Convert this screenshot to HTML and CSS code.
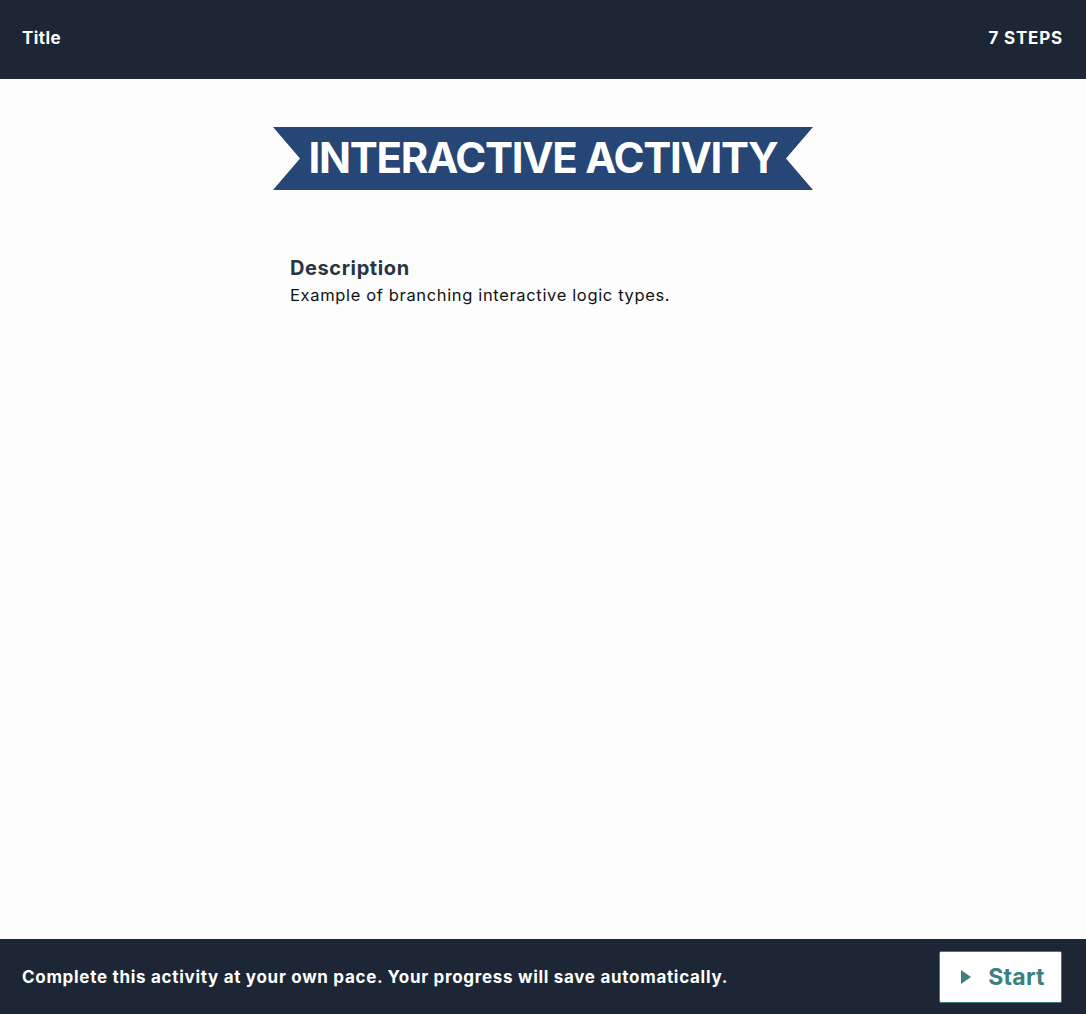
FILE: index.html
```html
<!DOCTYPE html>
<html>
<head>
<meta charset="utf-8">
<link rel="stylesheet" href="styles.css">
</head>
<body>
<div class="app">
  <header class="topbar">
    <div class="title">Title</div>
    <div class="steps">7 STEPS</div>
  </header>
  <main class="main">
    <div class="content">
      <div class="banner"><h1>INTERACTIVE ACTIVITY</h1></div>
      <section class="desc">
        <h2>Description</h2>
        <p>Example of branching interactive logic types.</p>
      </section>
    </div>
  </main>
  <footer class="bottombar">
    <div class="note">Complete this activity at your own pace. Your progress will save automatically.</div>
    <button class="start">
      <svg width="12" height="16" viewBox="0 0 12 16"><path d="M1 1 L11 8 L1 15 Z" fill="#3b8080"/></svg>
      <span>Start</span>
    </button>
  </footer>
</div>
</body>
</html>
```

FILE: styles.css
```css
* { box-sizing: border-box; }
html, body { margin: 0; padding: 0; }
body {
  font-family: Inter, "Noto Sans", sans-serif;
  background: #fdfdfd;
}
.app {
  height: 1014px;
  display: flex;
  flex-direction: column;
}
.topbar {
  height: 79px;
  background: #1c2634;
  color: #fff;
  display: flex;
  align-items: center;
  justify-content: space-between;
  padding: 0 23px 4px 22px;
  font-weight: 700;
  font-size: 17px;
}
.title { letter-spacing: 0.4px; }
.steps { letter-spacing: 0.8px; }
.main {
  flex: 1;
  display: flex;
  justify-content: center;
}
.content {
  width: 540px;
  padding-top: 48px;
}
.banner {
  height: 63px;
  background: #264675;
  clip-path: polygon(0 0, 100% 0, calc(100% - 27px) 50%, 100% 100%, 0 100%, 27px 50%);
  display: flex;
  align-items: center;
  justify-content: center;
}
.banner h1 {
  margin: 0;
  color: #fff;
  font-size: 42px;
  font-weight: 700;
  letter-spacing: -1.3px;
  line-height: 1;
  padding: 0 0 2px 0;
}
.desc {
  padding: 66px 17px 0;
}
.desc h2 {
  margin: 0;
  font-size: 20px;
  font-weight: 700;
  color: #273444;
  line-height: 24px;
  letter-spacing: 0.6px;
}
.desc p {
  margin: 4px 0 0;
  font-size: 16.5px;
  color: #111;
  line-height: 22px;
  letter-spacing: 0.65px;
}
.bottombar {
  height: 75px;
  background: #1c2634;
  color: #fff;
  display: flex;
  align-items: center;
  justify-content: space-between;
  padding: 0 24px 0 22px;
}
.note {
  font-weight: 700;
  font-size: 17px;
  letter-spacing: 0.7px;
}
.start {
  width: 123px;
  height: 52px;
  background: #fff;
  border: 1px solid #3b8080;
  border-radius: 2px;
  display: flex;
  align-items: center;
  justify-content: center;
  gap: 16px;
  font-family: Inter, sans-serif;
  font-size: 23px;
  font-weight: 700;
  color: #3b8080;
  padding: 0 0 0 4px;
  letter-spacing: 0.3px;
}
```
